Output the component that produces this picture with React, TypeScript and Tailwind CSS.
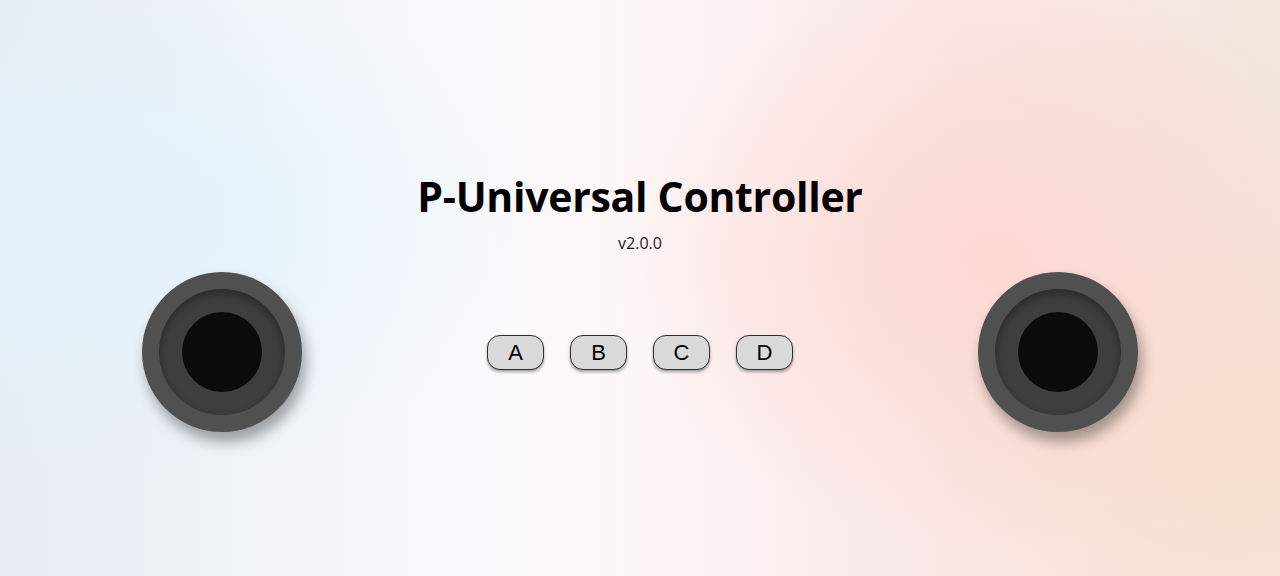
import React from "react";

function Joystick() {
  return (
    <div className="flex h-[160px] w-[160px] items-center justify-center rounded-full bg-[#505050] shadow-[4px_10px_14px_rgba(0,0,0,0.35)]">
      <div className="flex h-[126px] w-[126px] items-center justify-center rounded-full bg-[#3e3e3e] shadow-[inset_0_4px_10px_rgba(0,0,0,0.35)]">
        <div className="h-[80px] w-[80px] rounded-full bg-[#0b0b0b]" />
      </div>
    </div>
  );
}

function Btn({ label }: { label: string }) {
  return (
    <button className="flex h-[35px] w-[57px] items-center justify-center rounded-[13px] border-[1.5px] border-[#2e2e2e] bg-[#d9d9d9] pt-[1px] text-[22px] leading-none text-black shadow-[0_2px_3px_rgba(0,0,0,0.35)] [font-family:'Liberation_Sans',Arial,sans-serif]">
      {label}
    </button>
  );
}

export default function App() {
  return (
    <div className="flex h-screen w-full flex-col items-center bg-[radial-gradient(ellipse_32%_45%_at_10%_38%,#e4f2fc_0%,rgba(228,242,252,0)_100%),radial-gradient(ellipse_30%_50%_at_78%_45%,#fdd8d3_0%,rgba(253,216,211,0)_100%),radial-gradient(ellipse_25%_40%_at_96%_75%,#f9dfca_0%,rgba(249,223,202,0)_100%),linear-gradient(90deg,#e5ecf2_0%,#f8fafc_35%,#fdf6f6_50%,#f8e6e4_75%,#f2e6de_100%)] [font-family:'Open_Sans','Noto_Sans',sans-serif]">
      <h1 className="mt-[171px] text-[41px] font-bold leading-[50px] tracking-[-0.3px] text-black">
        P-Universal Controller
      </h1>
      <div className="mt-[12px] text-[16px] leading-[20px] text-[#1a1a1a]">v2.0.0</div>
      <div className="mt-[19px] flex w-full items-center justify-between px-[142px]">
        <Joystick />
        <div className="flex items-center gap-[26px]">
          <Btn label="A" />
          <Btn label="B" />
          <Btn label="C" />
          <Btn label="D" />
        </div>
        <Joystick />
      </div>
    </div>
  );
}
